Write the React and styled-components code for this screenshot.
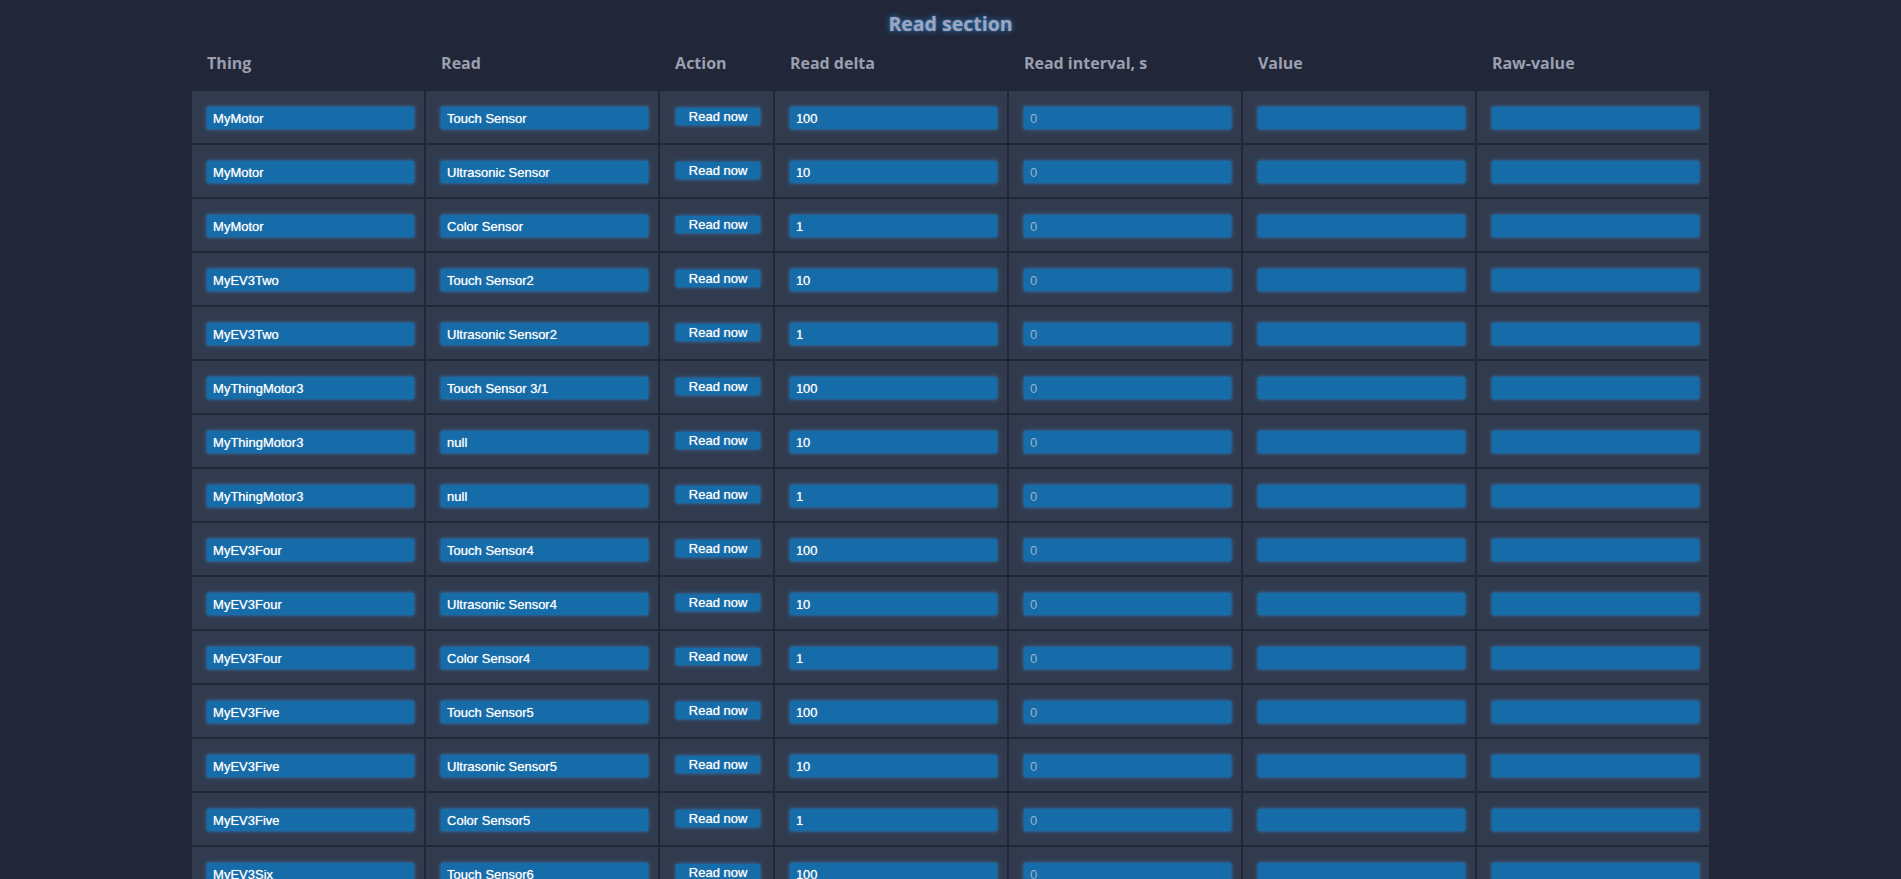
import styled, { createGlobalStyle } from "styled-components";

const rows = [
  ["MyMotor", "Touch Sensor", "100"],
  ["MyMotor", "Ultrasonic Sensor", "10"],
  ["MyMotor", "Color Sensor", "1"],
  ["MyEV3Two", "Touch Sensor2", "10"],
  ["MyEV3Two", "Ultrasonic Sensor2", "1"],
  ["MyThingMotor3", "Touch Sensor 3/1", "100"],
  ["MyThingMotor3", "null", "10"],
  ["MyThingMotor3", "null", "1"],
  ["MyEV3Four", "Touch Sensor4", "100"],
  ["MyEV3Four", "Ultrasonic Sensor4", "10"],
  ["MyEV3Four", "Color Sensor4", "1"],
  ["MyEV3Five", "Touch Sensor5", "100"],
  ["MyEV3Five", "Ultrasonic Sensor5", "10"],
  ["MyEV3Five", "Color Sensor5", "1"],
  ["MyEV3Six", "Touch Sensor6", "100"],
  ["MyEV3Six", "Ultrasonic Sensor6", "10"],
  ["MyEV3Six", "Color Sensor6", "1"],
];

const headers = [
  "Thing",
  "Read",
  "Action",
  "Read delta",
  "Read interval, s",
  "Value",
  "Raw-value",
];

const GlobalStyle = createGlobalStyle`
  html {
    scrollbar-width: none;
  }
  html::-webkit-scrollbar {
    display: none;
  }
  body {
    margin: 0;
    background: #212738;
    font-family: "Open Sans", sans-serif;
  }
`;

const Title = styled.h2`
  margin: 0;
  padding: 11px 0 5px;
  text-align: center;
  font-family: "Open Sans", sans-serif;
  font-size: 19.5px;
  font-weight: 700;
  line-height: 26.6px;
  color: #a1a5ba;
  text-shadow: 0 0 6px #2f78c0, 0 0 2px #2f78c0;
`;

const Table = styled.table`
  width: 80%;
  margin: 0 auto;
  border-spacing: 2px;
`;

const Th = styled.th`
  padding: 8px 15px 15px;
  text-align: left;
  font-family: "Open Sans", sans-serif;
  font-size: 16px;
  font-weight: 700;
  line-height: 21.8px;
  color: #9c9fb0;
`;

const Td = styled.td`
  width: ${(p) => (p.$narrow ? "90px" : "auto")};
  padding: 16px 10px 14px 15px;
  background: #323b4e;
  vertical-align: top;
`;

const Field = styled.input`
  box-sizing: border-box;
  display: block;
  width: 207px;
  height: 22px;
  margin: 0;
  padding: 0 6px;
  border: none;
  outline: none;
  background: #156ca9;
  box-shadow: 0 0 4px #2d86cf;
  color: ${(p) => (p.$muted ? "#9fb1c6" : "#ffffff")};
  text-shadow: ${(p) =>
    p.$muted ? "none" : "0 0 1px rgba(255, 255, 255, 0.7)"};
  font-family: "Liberation Sans", Arial, sans-serif;
  font-size: 13px;
`;

const Button = styled.button`
  display: block;
  box-sizing: border-box;
  width: 84px;
  height: 17px;
  margin: 1px 0 0 1px;
  padding: 0;
  border: none;
  background: #156ca9;
  box-shadow: 0 0 4px #2d86cf;
  color: #ffffff;
  text-shadow: 0 0 1px rgba(255, 255, 255, 0.7);
  font-family: "Liberation Sans", Arial, sans-serif;
  font-size: 13px;
  line-height: 17px;
  cursor: pointer;
`;

export default function App() {
  return (
    <>
      <GlobalStyle />
      <Title>Read section</Title>
      <Table>
        <thead>
          <tr>
            {headers.map((h) => (
              <Th key={h}>{h}</Th>
            ))}
          </tr>
        </thead>
        <tbody>
          {rows.map(([thing, read, delta], i) => (
            <tr key={i}>
              <Td>
                <Field defaultValue={thing} />
              </Td>
              <Td>
                <Field defaultValue={read} />
              </Td>
              <Td $narrow>
                <Button>Read now</Button>
              </Td>
              <Td>
                <Field defaultValue={delta} />
              </Td>
              <Td>
                <Field $muted defaultValue="0" />
              </Td>
              <Td>
                <Field />
              </Td>
              <Td>
                <Field />
              </Td>
            </tr>
          ))}
        </tbody>
      </Table>
    </>
  );
}
